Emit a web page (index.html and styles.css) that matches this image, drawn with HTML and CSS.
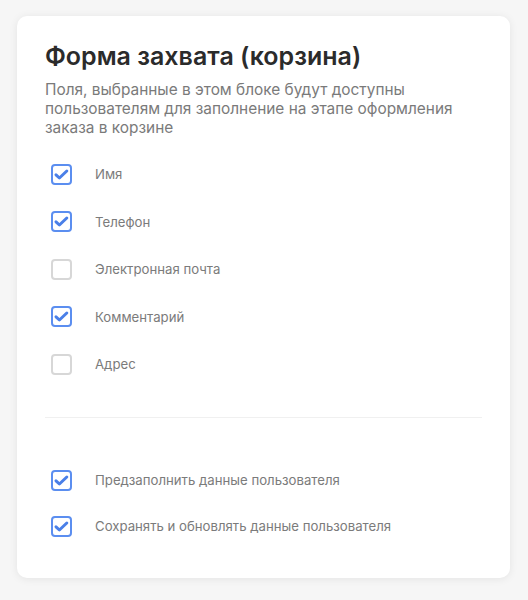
FILE: index.html
```html
<!DOCTYPE html>
<html>
  <head>
    <meta charset="utf-8">
    <link rel="stylesheet" href="styles.css">
  </head>
  <body>
    <div class="card">
      <h1 class="card-title">Форма захвата (корзина)</h1>
      <p class="card-desc">
        Поля, выбранные в этом блоке будут доступны пользователям для заполнение на этапе оформления заказа в корзине
      </p>

      <!-- Fields -->
      <div class="option-list">
        <label class="option">
          <span class="check checked">
            <svg viewBox="0 0 17 17"><path d="M3 8.8 L6.4 12 L13.8 5"/></svg>
          </span>
          <span class="option-label">Имя</span>
        </label>
        <label class="option">
          <span class="check checked">
            <svg viewBox="0 0 17 17"><path d="M3 8.8 L6.4 12 L13.8 5"/></svg>
          </span>
          <span class="option-label">Телефон</span>
        </label>
        <label class="option">
          <span class="check"></span>
          <span class="option-label">Электронная почта</span>
        </label>
        <label class="option">
          <span class="check checked">
            <svg viewBox="0 0 17 17"><path d="M3 8.8 L6.4 12 L13.8 5"/></svg>
          </span>
          <span class="option-label">Комментарий</span>
        </label>
        <label class="option">
          <span class="check"></span>
          <span class="option-label">Адрес</span>
        </label>
      </div>

      <div class="divider"></div>

      <!-- User data -->
      <div class="option-list settings">
        <label class="option">
          <span class="check checked">
            <svg viewBox="0 0 17 17"><path d="M3 8.8 L6.4 12 L13.8 5"/></svg>
          </span>
          <span class="option-label">Предзаполнить данные пользователя</span>
        </label>
        <label class="option">
          <span class="check checked">
            <svg viewBox="0 0 17 17"><path d="M3 8.8 L6.4 12 L13.8 5"/></svg>
          </span>
          <span class="option-label">Сохранять и обновлять данные пользователя</span>
        </label>
      </div>
    </div>
  </body>
</html>
```

FILE: styles.css
```css
* {
  margin: 0;
  padding: 0;
  box-sizing: border-box;
}

body {
  background: #f6f6f6;
  font-family: Inter, "Noto Sans", sans-serif;
  padding: 16px 18px 22px 17px;
}

.card {
  background: #ffffff;
  border-radius: 10px;
  box-shadow: 0 1px 8px rgb(0 0 0 / 0.08);
  padding: 25px 28px 28px 28px;
  height: 562px;
}

.card-title {
  font-size: 25px;
  font-weight: 600;
  color: #2b2b2b;
  line-height: 30px;
  margin-bottom: 9px;
}

.card-desc {
  font-size: 15.4px;
  line-height: 19px;
  color: #7a7a7a;
  padding-right: 16px;
  margin-bottom: 27px;
}

.option-list {
  display: flex;
  flex-direction: column;
  gap: 27.5px;
  padding-left: 6px;
}

.option {
  display: flex;
  align-items: center;
  gap: 23px;
  height: 20px;
  cursor: pointer;
}

.check {
  width: 21px;
  height: 21px;
  border: 2px solid #d7d7d7;
  border-radius: 4px;
  flex-shrink: 0;
  display: flex;
}

.check.checked {
  border-color: #5b8ef0;
}

.check svg {
  width: 17px;
  height: 17px;
  fill: none;
  stroke: #4a7fe8;
  stroke-width: 3;
  stroke-linecap: round;
  stroke-linejoin: round;
}

.option-label {
  font-size: 13.2px;
  color: #7b7b7b;
}

.divider {
  height: 1px;
  background: #f0f0f0;
  margin: 43px 0 52px 0;
}

.settings {
  gap: 26px;
}
```
